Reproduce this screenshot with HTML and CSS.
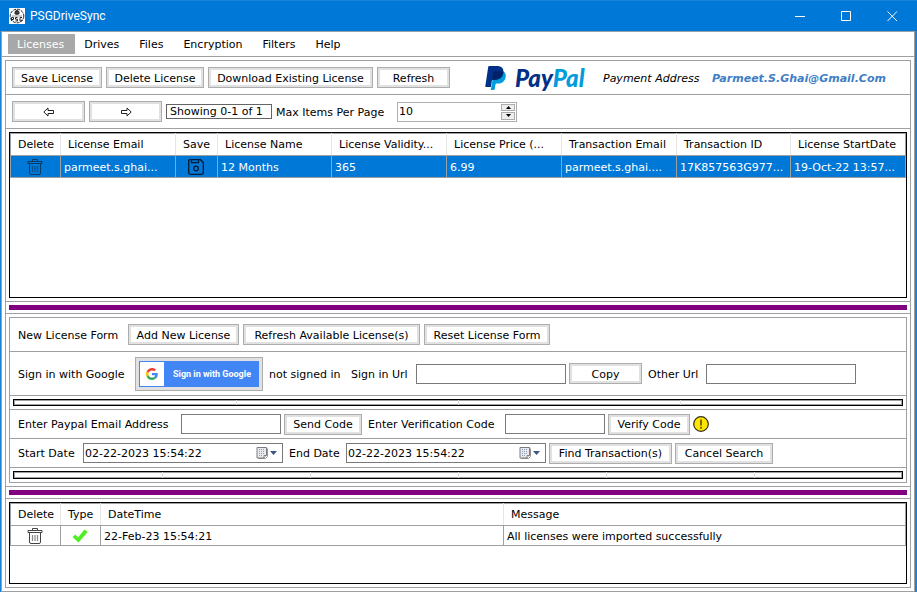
FILE: index.html
```html
<!DOCTYPE html>
<html lang="en">
<head>
<meta charset="utf-8">
<title>PSGDriveSync</title>
<link rel="stylesheet" href="styles.css">
</head>
<body>
<svg class="defs" width="0" height="0" aria-hidden="true">
  <symbol id="trash" viewBox="0 0 16 16">
    <path d="M5.5 2V.5h5V2M1 2.5h14v2H1zM2.5 4.500v9.500q0 1.500 1.500 1.500h8q1.500 0 1.500-1.500V4.500" fill="none" stroke="currentColor"/>
    <path d="M5.500 7v6M8 7v6M10.500 7v6" stroke="currentColor" stroke-width="1.200" opacity=".65"/>
  </symbol>
  <symbol id="calendar" viewBox="0 0 12 12">
    <path d="M2.500 11.500h7l2-2v-8" fill="none" stroke="#9a9088"/>
    <path d="M1 .5h9.500v8l-2.500 2.500H1z" fill="#e8eaee" stroke="#777c86"/>
    <path d="M3 2.500h6M3 4.500h6M3 6.500h6M3 8.500h4" stroke="#8d9fb8" stroke-dasharray="1 1"/>
    <path d="M8 11V8.500h2.500" fill="#fff" stroke="#8a8078"/>
  </symbol>
</svg>
<div class="window">
  <header class="titlebar">
    <svg class="app-icon" viewBox="0 0 16 16" aria-hidden="true">
      <path fill="#fff" d="M0 0h16v16H0z"/>
      <circle cx="8" cy="8" r="6.800" fill="none" stroke="#222" stroke-dasharray="3 1"/>
      <path d="M6 6V4.500a2 2 0 0 1 4 0V6zM8 3v4" fill="#555" stroke="#222"/>
      <path d="M3 8h10" stroke="#999"/>
      <path d="M2.500 13V9.500h2v2h-2M8.500 9.500h-2v1.700h2v1.800h-2M13 9.500h-2v3.500h2v-1.500" fill="none" stroke="#222"/>
    </svg>
    <h1 class="title">PSGDriveSync</h1>
    <div class="window-controls">
      <button type="button" aria-label="Minimize"><svg viewBox="0 0 11 11"><path d="M0 5.500h10"/></svg></button>
      <button type="button" aria-label="Maximize"><svg viewBox="0 0 11 11"><path d="M.5.5h9v9h-9z"/></svg></button>
      <button type="button" aria-label="Close"><svg viewBox="0 0 11 11"><path d="M.5.500l9.500 9.500M10 .500L.5 10"/></svg></button>
    </div>
  </header>
  <nav class="menu">
    <a class="active" href="#licenses">Licenses</a>
    <a href="#drives">Drives</a>
    <a href="#files">Files</a>
    <a href="#encryption">Encryption</a>
    <a href="#filters">Filters</a>
    <a href="#help">Help</a>
  </nav>
  <main class="panel" id="licenses">
    <div class="bar bar-actions">
      <button class="btn" type="button">Save License</button>
      <button class="btn" type="button">Delete License</button>
      <button class="btn" type="button">Download Existing License</button>
      <button class="btn" type="button">Refresh</button>
      <div class="paypal">
        <svg viewBox="0 0 21 24" aria-hidden="true">
          <path fill="#009cde" d="M5.800 24L8.500 8l9.500-2.800c2.300 1.200 3.200 3.100 2.600 6-.8 4.200-3.600 6.300-7.800 6.300h-1.400c-.5 0-.8.3-.9.800l-.8 4.900c-.1.500-.4.800-.9.800z"/>
          <path fill="#003087" d="M.3 20.300L3.200.9C3.300.3 3.700 0 4.300 0h7.500c4.800 0 7.300 2.300 6.500 6.800-.8 4.700-3.800 6.900-8.300 6.900H8c-.6 0-1 .3-1.100.9l-1 6.400H.9c-.5 0-.7-.3-.6-.7z"/>
          <path fill="#012169" d="M8.300 6c.1-.5.500-.8 1-.8h5.300c1.400 0 2.600.2 3.700.6v1c-.8 4.700-3.800 6.900-8.300 6.900H8c-.6 0-.9.300-1 .8z"/>
        </svg>
        <span class="wordmark">Pay<span>Pal</span></span>
      </div>
      <em>Payment Address</em>
      <a class="pay-mail" href="mailto:Parmeet.S.Ghai@Gmail.Com">Parmeet.S.Ghai@Gmail.Com</a>
    </div>
    <div class="bar bar-pager">
      <button class="btn" type="button" aria-label="Previous page"><svg class="arrow" viewBox="0 0 12 10"><path d="M.8 5L5 1v2.500h5.500v3H5V9z"/></svg></button>
      <button class="btn" type="button" aria-label="Next page"><svg class="arrow" viewBox="0 0 12 10"><path d="M11.200 5L7 1v2.500H1.500v3H7V9z"/></svg></button>
      <output class="showing">Showing 0-1 of 1</output>
      <label for="page-size">Max Items Per Page</label>
      <div class="spinner">
        <input id="page-size" type="text" inputmode="numeric" value="10">
        <div class="spin-buttons">
          <button type="button" aria-label="Increase"><svg viewBox="0 0 5 3"><path d="M0 3L2.500 0 5 3z"/></svg></button>
          <button type="button" aria-label="Decrease"><svg viewBox="0 0 5 3"><path d="M0 0l2.500 3L5 0z"/></svg></button>
        </div>
      </div>
    </div>
    <div class="cell cell-grow">
      <div class="grid-frame">
        <table class="grid">
          <colgroup><col class="c-icon"><col class="c-data"><col class="c-save"><col class="c-short"><col class="c-data"><col class="c-data"><col class="c-data"><col class="c-short"><col></colgroup>
          <thead><tr><th>Delete</th><th>License Email</th><th>Save</th><th>License Name</th><th>License Validity...</th><th>License Price (...</th><th>Transaction Email</th><th>Transaction ID</th><th>License StartDate</th></tr></thead>
          <tbody><tr class="selected">
            <td class="icon-cell"><button class="icon-btn" type="button" aria-label="Delete license"><svg><use href="#trash"/></svg></button></td>
            <td>parmeet.s.ghai...</td>
            <td class="icon-cell"><button class="icon-btn save" type="button" aria-label="Save license"><svg viewBox="0 0 16 16"><path d="M2 .7h10.500l2.800 2.800v10q0 1.800-1.800 1.800h-11Q.7 15.300.7 13.500V2Q.7.700 2 .7zM3.500.7v3h7v-3" fill="none" stroke="currentColor" stroke-width="1.300"/><circle cx="8" cy="9.500" r="2.300" fill="none" stroke="currentColor" stroke-width="1.300"/></svg></button></td>
            <td>12 Months</td><td>365</td><td>6.99</td><td>parmeet.s.ghai....</td><td>17K857563G977...</td><td>19-Oct-22 13:57...</td>
          </tr></tbody>
        </table>
      </div>
    </div>
    <div class="cell"><div class="splitter"></div></div>
    <div class="cell">
      <form class="license-form">
        <div class="bar bar-new">
          <span>New License Form</span>
          <button class="btn" type="button">Add New License</button>
          <button class="btn" type="button">Refresh Available License(s)</button>
          <button class="btn" type="reset">Reset License Form</button>
        </div>
        <div class="bar bar-google">
          <span>Sign in with Google</span>
          <button class="google" type="button">
            <span class="g-logo"><svg viewBox="0 0 48 48" aria-hidden="true"><path fill="#ea4335" d="M24 9.500c3.540 0 6.710 1.220 9.210 3.600l6.850-6.850C35.900 2.380 30.470 0 24 0 14.620 0 6.510 5.380 2.560 13.220l7.980 6.190C12.430 13.720 17.740 9.500 24 9.500z"/><path fill="#4285f4" d="M46.980 24.550c0-1.570-.15-3.090-.38-4.550H24v9.020h12.940c-.58 2.960-2.260 5.480-4.780 7.180l7.730 6c4.510-4.180 7.090-10.360 7.090-17.650z"/><path fill="#fbbc05" d="M10.530 28.590c-.48-1.450-.76-2.990-.76-4.590s.27-3.140.76-4.590l-7.980-6.190C.92 16.460 0 20.120 0 24s.92 7.540 2.560 10.780z"/><path fill="#34a853" d="M24 48c6.480 0 11.930-2.130 15.890-5.810l-7.730-6c-2.150 1.450-4.920 2.300-8.160 2.300-6.260 0-11.570-4.220-13.470-9.910l-7.980 6.190C6.510 42.620 14.620 48 24 48z"/></svg></span>
            <span class="g-text">Sign in with Google</span>
          </button>
          <span class="after">not signed in</span>
          <label class="after" for="signin-url">Sign in Url</label>
          <input class="field" id="signin-url" type="text">
          <button class="btn" type="button">Copy</button>
          <label class="after" for="other-url">Other Url</label>
          <input class="field" id="other-url" type="text">
        </div>
        <div class="cell"><div class="strip strip-4"><i></i><i></i><i></i><i></i></div></div>
        <div class="bar bar-verify">
          <label for="paypal-mail">Enter Paypal Email Address</label>
          <input class="field" id="paypal-mail" type="text">
          <button class="btn" type="button">Send Code</button>
          <label class="after" for="code">Enter Verification Code</label>
          <input class="field" id="code" type="text">
          <button class="btn" type="button">Verify Code</button>
          <svg class="warning" viewBox="0 0 16 16" role="img" aria-label="Not verified"><circle cx="8" cy="8" r="7.300" fill="#ffe500" stroke="#33301a" stroke-width="1.200"/><path d="M8 3.500v6M8 10.800v1.900" stroke="#6e6200" stroke-width="1.800"/></svg>
        </div>
        <div class="bar bar-dates">
          <label for="start">Start Date</label>
          <div class="datebox"><input id="start" type="text" value="02-22-2023 15:54:22"><button type="button" aria-label="Pick start date"><svg class="cal"><use href="#calendar"/></svg><svg class="drop" viewBox="0 0 7 4"><path d="M0 0h7L3.500 4z"/></svg></button></div>
          <label class="after" for="end">End Date</label>
          <div class="datebox"><input id="end" type="text" value="02-22-2023 15:54:22"><button type="button" aria-label="Pick end date"><svg class="cal"><use href="#calendar"/></svg><svg class="drop" viewBox="0 0 7 4"><path d="M0 0h7L3.500 4z"/></svg></button></div>
          <button class="btn" type="button">Find Transaction(s)</button>
          <button class="btn" type="button">Cancel Search</button>
        </div>
        <div class="cell"><div class="strip strip-6"><i></i><i></i><i></i><i></i><i></i><i></i></div></div>
      </form>
    </div>
    <div class="cell"><div class="splitter"></div></div>
    <div class="cell">
      <div class="grid-frame log">
        <table class="grid">
          <colgroup><col class="c-icon"><col class="c-type"><col class="c-time"><col></colgroup>
          <thead><tr><th>Delete</th><th>Type</th><th>DateTime</th><th>Message</th></tr></thead>
          <tbody><tr>
            <td class="icon-cell"><button class="icon-btn" type="button" aria-label="Delete message"><svg><use href="#trash"/></svg></button></td>
            <td class="icon-cell"><svg class="check" viewBox="0 0 16 14" role="img" aria-label="Success"><path d="M.5 8L3.500 5.500 6 8.500 12.500.5 15.700 3 6.500 13.500z" fill="#4bf01e"/></svg></td>
            <td>22-Feb-23 15:54:21</td><td>All licenses were imported successfully</td>
          </tr></tbody>
        </table>
      </div>
    </div>
  </main>
</div>
</body>
</html>
```
FILE: styles.css
```css
* { box-sizing: border-box; }

:root {
  --blue: #0078d7;
  --line: #a0a0a0;
}

body {
  margin: 0;
  background: #fff;
  color: #000;
  font: 11px/14px "DejaVu Sans", Verdana, sans-serif;
}

button, input {
  margin: 0;
  padding: 0;
  border: 0;
  border-radius: 0;
  background: #fff;
  color: inherit;
  font: inherit;
}

svg { display: block; flex: none; }
.defs { position: absolute; }

.window {
  display: flex;
  flex-direction: column;
  min-height: 100vh;
  border: solid #1883d7;
  border-width: 0 2px 0 1px;
}

/* Title bar */
.titlebar {
  display: flex;
  align-items: center;
  height: 31px;
  margin: 0 -2px 0 -1px;
  padding: 0 2px 0 9px;
  border-top: 1px solid #1883d7;
  background: var(--blue);
  color: #fff;
}
.app-icon { width: 16px; height: 16px; }
.title {
  flex: 1;
  margin: 0 0 0 5px;
  font: 12px/16px Roboto, "Open Sans", sans-serif;
}
.window-controls { display: flex; }
.window-controls button {
  display: grid;
  place-items: center;
  width: 46px;
  height: 30px;
  background: none;
}
.window-controls svg { width: 11px; height: 11px; fill: none; stroke: #fff; }

/* Menu */
.menu {
  display: flex;
  height: 26px;
  padding: 2px 6px;
  border: 1px solid var(--line);
}
.menu a {
  height: 20px;
  padding: 4px 11px 2px 9px;
  color: #000;
  text-decoration: none;
}
.menu .active { background: #a8a8a8; color: #fff; }

/* Framed rows */
.panel {
  flex: 1;
  display: flex;
  flex-direction: column;
  margin: 0;
  padding: 3px;
  border: solid var(--line);
  border-width: 0 1px 1px;
}
.panel > * {
  border: 1px solid var(--line);
  border-top: 0;
}
.panel > :first-child { border-top: 1px solid var(--line); }

.bar {
  display: grid;
  flex: none;
  justify-content: start;
  align-items: center;
  column-gap: 3px;
  min-height: 29px;
  padding-left: 8px;
}
.bar > * { white-space: nowrap; }
.bar > span, .bar > label, .bar > em, .bar > a { padding-top: 2px; }
.bar > .after { padding-left: 3px; }
.bar-actions, .bar-pager { column-gap: 4px; min-height: 34px; padding-left: 6px; }
.bar-actions {
  grid-template-columns: 90px 98px 165px 73px 145px 105px auto;
  min-height: 35px;
}
.bar-pager { grid-template-columns: 73px 73px 106px 117px 120px; }
.bar-new { grid-template-columns: 106px 111px 177px 126px; column-gap: 4px; min-height: 33px; }
.bar-google { grid-template-columns: 114px 128px 79px 65px 150px 73px 58px 150px; min-height: 44px; }
.bar-verify { grid-template-columns: 160px 100px 78px 137px 100px 82px 16px; }
.bar-dates { grid-template-columns: 62px 200px 57px 200px 123px 98px; }

.btn {
  height: 21px;
  padding: 2px 0 0;
  border: 1px solid #adadad;
  box-shadow: inset 0 0 0 2px #e1e1e1;
  text-align: center;
}
.arrow { width: 12px; height: 10px; margin: 0 auto 2px; fill: #fff; stroke: #222; stroke-width: 1; }

.paypal {
  display: flex;
  align-items: center;
  gap: 9px;
  margin-left: 31px;
}
.paypal svg { width: 21px; height: 24px; }
.wordmark { color: #003087; font: italic 900 24px/24px Lato, sans-serif; }
.wordmark span { color: #009cde; }
.pay-mail {
  color: #3f7dc4;
  font-style: italic;
  font-weight: bold;
  text-decoration: none;
}

.showing { height: 15px; padding: 0 3px; border: 1px solid #646464; }

.spinner, .datebox {
  display: flex;
  height: 20px;
  border: 1px solid #7a7a7a;
}
.spinner { border-color: #abadb3; }
.spinner input, .datebox input { flex: 1; min-width: 0; height: 18px; padding-left: 1px; }
.spin-buttons { display: grid; width: 15px; gap: 1px; padding: 1px 1px 1px 0; }
.spin-buttons button { display: grid; place-items: center; background: #eee; border: 1px solid #adadad; }
.spin-buttons svg { width: 5px; height: 3px; }
.datebox button { display: flex; align-items: center; gap: 2px; width: 26px; }
.cal { width: 12px; height: 12px; }
.drop { width: 7px; height: 4px; fill: #3b5585; }

.field { width: 100%; height: 20px; padding: 0 2px; border: 1px solid #7a7a7a; }
.warning { width: 16px; height: 16px; }

.google {
  display: flex;
  height: 34px;
  padding: 3px;
  border: 1px solid #adadad;
  background: #e1e1e1;
}
.g-logo {
  display: grid;
  place-items: center;
  width: 26px;
  height: 26px;
  border: 1px solid #4285f4;
  background: #fff;
}
.g-logo svg { width: 12px; height: 12px; }
.g-text {
  flex: 1;
  height: 26px;
  background: #4285f4;
  color: #fff;
  font: bold 9px/26px Roboto, sans-serif;
}

/* Data grids */
.cell { padding: 3px; }
.cell-grow { flex: 1; display: flex; }
.grid-frame { flex: 1; min-width: 0; border: 1px solid #000; }
.log { height: 82px; }
.grid {
  width: 100%;
  table-layout: fixed;
  border-collapse: collapse;
  border: 1px solid var(--line);
}
.c-icon { width: 50px; }
.c-save { width: 42px; }
.c-type { width: 40px; }
.c-data { width: 115px; }
.c-short { width: 114px; }
.c-time { width: 403px; }
.grid th, .grid td {
  height: 22px;
  padding: 0;
  overflow: hidden;
  text-align: left;
  white-space: nowrap;
  font-weight: normal;
}
.grid th { padding-left: 7px; border-right: 1px solid #e5e5e5; border-bottom: 1px solid var(--line); }
.grid th:last-child { border-right-color: var(--line); }
.grid td { padding: 2px 0 0 3px; border: 1px solid var(--line); }
.grid .icon-cell { padding: 0 2px 0 0; }
.log td { height: 20px; }
.selected { background: var(--blue); color: #fff; }
.icon-btn { display: block; width: 16px; height: 16px; margin: 0 auto; background: none; color: #444; }
.selected .icon-btn { color: #0a3a68; }
.selected .save { color: #001a33; }
.icon-btn svg { width: 16px; height: 16px; }
.check { width: 16px; height: 14px; margin: 0 auto; }

.splitter { height: 5px; background: #800080; }

/* License form */
.license-form { border: 1px solid var(--line); }
.license-form > * + * { border-top: 1px solid var(--line); }
.strip { display: grid; height: 7px; border: 1px solid #000; box-shadow: inset 0 0 0 1px var(--line); }
.strip i + i { border-left: 1px solid #ddd; }
.strip-4 { grid-template-columns: repeat(4, 1fr); }
.strip-6 { grid-template-columns: repeat(6, 1fr); height: 8px; }
```
